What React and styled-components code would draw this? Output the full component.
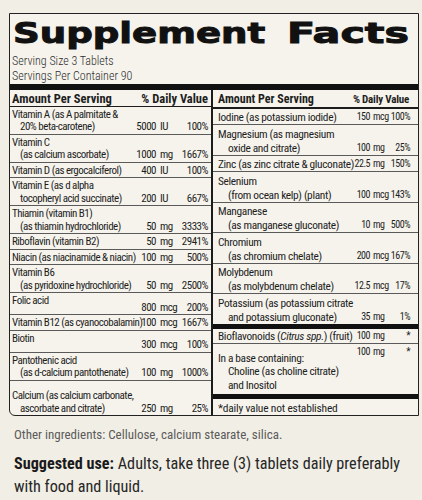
import React from "react";
import styled, { createGlobalStyle } from "styled-components";

const GlobalStyle = createGlobalStyle`
  html, body { margin: 0; padding: 0; background: #f1eee5; }
`;

const leftRows = [
  { label: ["Vitamin A (as A palmitate &", "20% beta-carotene)"], num: "5000", unit: "IU", pct: "100%" },
  { label: ["Vitamin C", "(as calcium ascorbate)"], num: "1000", unit: "mg", pct: "1667%" },
  { label: ["Vitamin D (as ergocalciferol)"], num: "400", unit: "IU", pct: "100%" },
  { label: ["Vitamin E (as d alpha", "tocopheryl acid succinate)"], num: "200", unit: "IU", pct: "667%" },
  { label: ["Thiamin (vitamin B1)", "(as thiamin hydrochloride)"], num: "50", unit: "mg", pct: "3333%" },
  { label: ["Riboflavin (vitamin B2)"], num: "50", unit: "mg", pct: "2941%" },
  { label: ["Niacin (as niacinamide & niacin)"], num: "100", unit: "mg", pct: "500%" },
  { label: ["Vitamin B6", "(as pyridoxine hydrochloride)"], num: "50", unit: "mg", pct: "2500%" },
  { label: ["Folic acid"], num: "800", unit: "mcg", pct: "200%", offset: true },
  { label: ["Vitamin B12 (as cyanocobalamin)"], num: "100", unit: "mcg", pct: "1667%" },
  { label: ["Biotin"], num: "300", unit: "mcg", pct: "100%", offset: true },
  { label: ["Pantothenic acid", "(as d-calcium pantothenate)"], num: "100", unit: "mg", pct: "1000%" },
  { label: ["Calcium (as calcium carbonate,", "ascorbate and citrate)"], num: "250", unit: "mg", pct: "25%" },
];

const rightRows = [
  { label: ["Iodine (as potassium iodide)"], num: "150", unit: "mcg", pct: "100%" },
  { label: ["Magnesium (as magnesium", "oxide and citrate)"], num: "100", unit: "mg", pct: "25%" },
  { label: ["Zinc (as zinc citrate & gluconate)"], num: "22.5", unit: "mg", pct: "150%" },
  { label: ["Selenium", "(from ocean kelp) (plant)"], num: "100", unit: "mcg", pct: "143%" },
  { label: ["Manganese", "(as manganese gluconate)"], num: "10", unit: "mg", pct: "500%" },
  { label: ["Chromium", "(as chromium chelate)"], num: "200", unit: "mcg", pct: "167%" },
  { label: ["Molybdenum", "(as molybdenum chelate)"], num: "12.5", unit: "mcg", pct: "17%" },
  { label: ["Potassium (as potassium citrate", "and potassium gluconate)"], num: "35", unit: "mg", pct: "1%" },
];

export default function App() {
  return (
    <>
      <GlobalStyle />
      <Page>
        <Panel>
          <Title>
            <TitleWord $origin="left" $sx={1.28}>Supplement</TitleWord>
            <TitleWord $origin="right" $sx={1.42}>Facts</TitleWord>
          </Title>
          <Serving>
            <div>Serving Size 3 Tablets</div>
            <div>Servings Per Container 90</div>
          </Serving>
          <Bar $h={6} />
          <Table>
            <LeftCol>
              <Header $side="left">
                <span>Amount Per Serving</span>
                <span>% Daily Value</span>
              </Header>
              {leftRows.map((r, i) => (
                <Row key={i} $side="left" $offset={r.offset} $last={i === leftRows.length - 1}>
                  <Label $offset={r.offset}>
                    {r.label.map((l, j) => (
                      <Line key={j} $indent={j > 0 ? 8 : 0}>{l}</Line>
                    ))}
                  </Label>
                  <Num>{r.num}</Num>
                  <Unit>{r.unit}</Unit>
                  <Pct>{r.pct}</Pct>
                </Row>
              ))}
            </LeftCol>
            <RightCol>
              <Header $side="right">
                <span>Amount Per Serving</span>
                <HeadPct>% Daily Value</HeadPct>
              </Header>
              {rightRows.map((r, i) => (
                <Row key={i} $side="right" $last={i === rightRows.length - 1}>
                  <Label>
                    {r.label.map((l, j) => (
                      <Line key={j} $indent={j > 0 ? 10 : 0}>{l}</Line>
                    ))}
                  </Label>
                  <Num $small>{r.num}</Num>
                  <Unit $small>{r.unit}</Unit>
                  <Pct $small>{r.pct}</Pct>
                </Row>
              ))}
              <Bar $h={5} />
              <Row $side="right" $tight>
                <Label>
                  <Line>
                    Bioflavonoids (<i>Citrus spp.</i>) (fruit)
                  </Line>
                </Label>
                <Num $small>100</Num>
                <Unit $small>mg</Unit>
                <Pct $small>*</Pct>
              </Row>
              <Row $side="right" $tight $last>
                <BaseLabel>
                  <Line>In a base containing:</Line>
                  <Line $indent={10}>Choline (as choline citrate)</Line>
                  <Line $indent={10}>and Inositol</Line>
                </BaseLabel>
                <Num $small $top>100</Num>
                <Unit $small $top>mg</Unit>
                <Pct $small $top>*</Pct>
              </Row>
              <Bar $h={5} />
              <Footnote>*daily value not established</Footnote>
            </RightCol>
          </Table>
        </Panel>
        <Other>Other ingredients: Cellulose, calcium stearate, silica.</Other>
        <Suggested>
          <b>Suggested use:</b> Adults, take three (3) tablets daily preferably with food and liquid.
        </Suggested>
      </Page>
    </>
  );
}

const Page = styled.div`
  width: 422px;
  height: 500px;
  box-sizing: border-box;
  padding: 13px 3px 0 9px;
  overflow: hidden;
  background: #f1eee5;
  color: #1e1e1e;
  font-family: "Roboto Condensed", "Liberation Sans", sans-serif;
`;

const Panel = styled.section`
  width: 410px;
  box-sizing: border-box;
  border: 1.5px solid #222;
  border-bottom-left-radius: 6px;
  background: #f5f3ec;
`;

const Title = styled.h1`
  margin: 0;
  padding: 4px 9px 0 3px;
  display: flex;
  justify-content: space-between;
  font-family: "DejaVu Sans", sans-serif;
  font-weight: 700;
  font-size: 29px;
  line-height: 30px;
  color: #111;
  -webkit-text-stroke: 1px #111;
`;

const TitleWord = styled.span`
  display: inline-block;
  transform: scaleX(${(p) => p.$sx});
  transform-origin: ${(p) => p.$origin};
`;

const Serving = styled.div`
  padding: 6px 0 0 2px;
  font-size: 12px;
  line-height: 14.5px;
  font-weight: 300;
  color: #2e2e2e;
`;

const Bar = styled.div`
  height: ${(p) => p.$h}px;
  margin-top: 1px;
  background: #111;
`;

const Table = styled.div`
  display: grid;
  grid-template-columns: 203px 1fr;
`;

const LeftCol = styled.div`
  display: flex;
  flex-direction: column;
  border-right: 2px solid #1c1c1c;
`;

const RightCol = styled.div`
  display: flex;
  flex-direction: column;
  ${Bar} {
    margin-top: 0;
  }
`;

const Header = styled.div`
  display: flex;
  justify-content: space-between;
  align-items: baseline;
  padding: 1.5px ${(p) => (p.$side === "left" ? "3px 0 2px" : "9px 0 5px")};
  font-size: ${(p) => (p.$side === "left" ? "12.5px" : "12px")};
  line-height: 14px;
  font-weight: 700;
  border-bottom: ${(p) => (p.$side === "left" ? "1.5px" : "2px")} solid #1c1c1c;
`;

const HeadPct = styled.span`
  font-size: 11px;
  letter-spacing: -0.2px;
`;

const Row = styled.div`
  display: grid;
  grid-template-columns: ${(p) =>
    p.$side === "left" ? "minmax(0, 1fr) 28px 22px 30px" : "minmax(0, 1fr) 30px 20px 20px"};
  align-items: end;
  padding: ${(p) => (p.$tight ? "0" : p.$side === "left" ? "2px" : "1.5px")}
    ${(p) => (p.$side === "left" ? "3px 0 2px" : "8px 0 5px")};
  min-height: ${(p) => (p.$offset ? "19px" : "0")};
  flex-grow: ${(p) => (p.$last ? 1 : 0)};
  border-bottom: ${(p) => (p.$last ? "none" : "1px solid #5a5a5a")};
  font-size: ${(p) => (p.$side === "left" ? "11px" : "11.4px")};
  line-height: ${(p) => (p.$side === "left" ? "12.5px" : "14px")};
  letter-spacing: ${(p) => (p.$side === "left" ? "-0.5px" : "-0.35px")};
`;

const Label = styled.div`
  align-self: ${(p) => (p.$offset ? "start" : "end")};
  white-space: nowrap;
`;

const BaseLabel = styled(Label)`
  padding: 8px 0 2px;
  line-height: 13.5px;
`;

const Line = styled.div`
  padding-left: ${(p) => p.$indent || 0}px;
`;

const Num = styled.div`
  text-align: right;
  white-space: nowrap;
  align-self: ${(p) => (p.$top ? "start" : "end")};
  padding-top: ${(p) => (p.$top ? "1px" : "0")};
  font-size: ${(p) => (p.$small ? "10px" : "inherit")};
  letter-spacing: ${(p) => (p.$small ? "-0.5px" : "inherit")};
`;

const Unit = styled(Num)`
  text-align: left;
  padding-left: ${(p) => (p.$small ? "3px" : "4px")};
`;

const Pct = styled(Num)`
  text-align: right;
`;

const Footnote = styled.div`
  flex-grow: 1;
  padding: 2px 0 0 5px;
  font-size: 11.5px;
  line-height: 14px;
  letter-spacing: -0.2px;
`;

const Other = styled.p`
  margin: 11px 0 0 5px;
  font-size: 13px;
  line-height: 15px;
  color: #5b5b5b;
`;

const Suggested = styled.p`
  margin: 10px 0 0 5px;
  width: 404px;
  font-size: 16.2px;
  line-height: 23px;
  color: #262626;
  b {
    font-weight: 700;
    color: #1a1a1a;
  }
`;
